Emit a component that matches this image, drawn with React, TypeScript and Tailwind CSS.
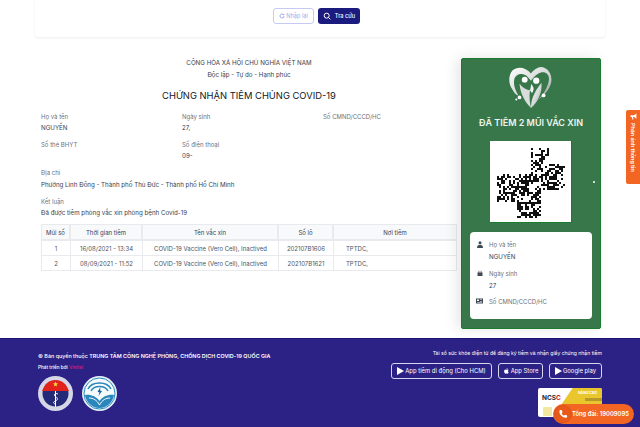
import React from "react";

const inter = "font-['Inter','Noto_Sans',sans-serif]";

function QR() {
  const regions = [
    [530, 148, 548, 165],
    [530, 163, 565, 190],
    [497, 173, 540, 202],
    [517, 190, 540, 217],
  ];
  const rects: React.ReactNode[] = [];
  let seed = 12345;
  const rnd = () => {
    seed = (seed * 1103515245 + 12345) & 0x7fffffff;
    return (seed >> 8) % 100;
  };
  for (let y = 148; y < 217; y += 2) {
    for (let x = 497; x < 565; x += 2) {
      const inside = regions.some((r) => x >= r[0] && x < r[2] && y >= r[1] && y < r[3]);
      if (inside && rnd() < 50) {
        rects.push(<rect key={`${x}-${y}`} x={x - 490} y={y - 141} width="2" height="2" fill="#111" />);
      }
    }
  }
  return (
    <svg width="82" height="82" viewBox="0 0 82 82" className="block">
      {rects}
    </svg>
  );
}

function HeartLogo() {
  return (
    <svg width="44" height="44" viewBox="0 0 42 42">
      <defs>
        <linearGradient id="silver" x1="0" y1="0" x2="1" y2="1">
          <stop offset="0" stopColor="#ffffff" />
          <stop offset="0.55" stopColor="#d4d8d6" />
          <stop offset="1" stopColor="#8f9a95" />
        </linearGradient>
      </defs>
      <path
        d="M21 8C16 2 8 1 3.500 5 -1 10 -0.500 18 3 23 5 27 7 29 9 29 6 24 4 19 5 14 6 8 14 7 17.500 11L21 15C24 11 27 8 31 7 35 6 39 9 38 15 37 21 33 28 28 33 33 30 38 24 40 18 42 10 38 3 31 2 27 2 23.500 5 21 8Z"
        fill="url(#silver)"
      />
      <path d="M21 41C15 35 11 28 10 18 13 22 17 24 20 24 19 30 20 36 21 41Z" fill="#d8dcda" />
      <path d="M21 41C21 34 23 27 31 17 32 27 27 36 21 41Z" fill="url(#silver)" />
      <path d="M20 24C21 21 21 20 21 18 23 21 25 22 22 27Z" fill="#f1f3f2" />
      <circle cx="15" cy="14" r="2.800" fill="#fff" />
      <circle cx="26" cy="15" r="3" fill="#fff" />
      <circle cx="10" cy="31" r="1.800" fill="#fff" />
      <circle cx="7" cy="33" r="1" fill="#fff" />
      <circle cx="33" cy="29" r="1.800" fill="#fff" />
    </svg>
  );
}

function HealthSeal() {
  return (
    <svg width="35" height="35" viewBox="0 0 35 35">
      <circle cx="17.500" cy="17.500" r="17.500" fill="#d5d7e6" />
      <circle cx="17.500" cy="17.500" r="13" fill="#242a78" />
      <path d="M6 11A13 13 0 0 1 29 11L31 15H4Z" fill="#e3231b" />
      <path d="M17.500 5.500l.7 1.800 1.900.1-1.500 1.200.5 1.800-1.600-1-1.600 1 .5-1.800-1.500-1.200 1.900-.1z" fill="#f6d743" />
      <path d="M17.500 15V31" stroke="#fff" strokeWidth="1" />
      <path d="M20 18c-3-1.500-5 1-2.500 2.500s2.500 3.500 0 4.500-2.500 2-.5 3" stroke="#fff" strokeWidth="1" fill="none" />
    </svg>
  );
}

function TechSeal() {
  return (
    <svg width="35" height="35" viewBox="0 0 35 35">
      <circle cx="17.500" cy="17.500" r="17.500" fill="#e6f1f7" />
      <circle cx="17.500" cy="17.500" r="15.500" fill="#f5fafc" stroke="#2a86bb" strokeWidth="1" />
      <path d="M6 13C10 5 25 5 29 13" stroke="#2a86bb" strokeWidth="1.500" fill="none" />
      <path d="M9 15C12 9 23 9 26 15" stroke="#2a86bb" strokeWidth="1.500" fill="none" />
      <path d="M18.500 11l-3 5 2 .3-1 3.700 3.500-5-2-.4z" fill="#1c5f97" />
      <path d="M3 19c5-1 11 1 14.500 6 3.500-5 9.500-7 14.500-6-1 7-7 13-14.500 13S4 26 3 19Z" fill="#2a86bb" />
      <path d="M7 22c4 0 8 2 10.500 7M28 22c-4 0-8 2-10.500 7" stroke="#fff" strokeWidth="1" fill="none" />
    </svg>
  );
}

function PlayIcon() {
  return (
    <svg width="7" height="8" viewBox="0 0 7 8">
      <path d="M0 0L7 4L0 8Z" fill="#fff" />
    </svg>
  );
}

function AppleIcon() {
  return (
    <svg width="7" height="8" viewBox="0 0 24 24" fill="#fff">
      <path d="M17 12.500c0-2.500 2-3.700 2.100-3.800-1.200-1.700-3-1.900-3.600-2-1.500-.2-3 .9-3.700.9-.8 0-2-.9-3.200-.9-1.700 0-3.200 1-4 2.400-1.700 3-.4 7.400 1.200 9.800.8 1.200 1.800 2.500 3.100 2.400 1.200 0 1.700-.8 3.200-.8s1.900.8 3.200.8 2.200-1.200 3-2.300c.9-1.400 1.300-2.700 1.300-2.800-.1 0-2.600-1-2.600-3.700zM14.600 5c.7-.8 1.100-1.900 1-3-1 0-2.100.7-2.800 1.500-.6.700-1.200 1.800-1 2.900 1.100.1 2.100-.6 2.800-1.400z" />
    </svg>
  );
}

function Field({ label, value, className = "", tall = false }: { label: string; value?: string; className?: string; tall?: boolean }) {
  return (
    <div className={className}>
      <div className={`${tall ? "h-[12px]" : "h-[11px]"} text-[6px] leading-[11px] text-[#6b7280]`}>{label}</div>
      {value && <div className="h-[12px] text-[6.200px] leading-[12px] text-[#374151]">{value}</div>}
    </div>
  );
}

function InfoRow({ icon, label, value }: { icon: React.ReactNode; label: string; value?: string }) {
  return (
    <div className="flex h-[28.500px]">
      <div className="flex w-[19px] justify-center pt-[2px]">{icon}</div>
      <div>
        <div className="h-[11px] text-[6px] leading-[11px] text-[#6b7280]">{label}</div>
        {value && <div className="mt-[1px] text-[6.200px] leading-[11px] text-[#374151]">{value}</div>}
      </div>
    </div>
  );
}

const th = "border-r-2 border-[#e8eaee]";
const td = "border-r border-[#e8eaee]";

export default function App() {
  return (
    <div className={`relative flex h-[427px] w-[640px] flex-col overflow-hidden bg-white ${inter}`}>
      <div className="mx-[35px] flex h-[37px] w-[570px] justify-start gap-[4px] rounded-b-[3px] bg-white pl-[238px] pt-[8px] shadow-[0_1px_3px_rgba(0,0,0,0.07)]">
        <button className="flex h-[16px] w-[41px] items-center justify-center gap-[1px] rounded-[3px] border border-[#c7c9f5] text-[5.600px] text-[#a6a9e8]">
          <svg width="6" height="6" viewBox="0 0 24 24" fill="none" stroke="#8b8fe0" strokeWidth="3">
            <path d="M20 12a8 8 0 1 1-3-6.200M20 3v4h-4" />
          </svg>
          Nhập lại
        </button>
        <button className="flex h-[16px] w-[42px] items-center justify-center gap-[4px] rounded-[3px] bg-[#1b1a7e] text-[5.600px] font-medium text-white">
          <svg width="8" height="8" viewBox="0 0 24 24" fill="none" stroke="#fff" strokeWidth="3">
            <circle cx="11" cy="11" r="7.500" />
            <path d="M17 17l5 5" />
          </svg>
          Tra cứu
        </button>
      </div>

      <div className="mt-[21px] flex h-[271px] pl-[41px]">
        <div className="-mt-[1px] w-[416px]">
          <div className="text-center text-[6.200px] leading-[12px] text-[#374151]">CỘNG HÒA XÃ HỘI CHỦ NGHĨA VIỆT NAM</div>
          <div className="text-center text-[6.200px] leading-[12px] text-[#374151]">Độc lập - Tự do - Hạnh phúc</div>
          <div className="mt-[7px] h-[15px] text-center text-[9.400px] font-normal leading-[15px] text-[#111827]">CHỨNG NHẬN TIÊM CHỦNG COVID-19</div>

          <div className="mt-[8px] grid grid-cols-[141px_141px_1fr] gap-y-[5px]">
            <Field label="Họ và tên" value="NGUYỄN" />
            <Field label="Ngày sinh" value="27," />
            <Field label="Số CMND/CCCD/HC" />
            <Field label="Số thẻ BHYT" />
            <Field label="Số điện thoại" value="09-" />
          </div>
          <Field tall label="Địa chỉ" value="Phường Linh Đông - Thành phố Thủ Đức - Thành phố Hồ Chí Minh" className="mt-[5px]" />
          <Field label="Kết luận" value="Đã được tiêm phòng vắc xin phòng bệnh Covid-19" className="mt-[5px]" />

          <div className="mt-[5px] border border-[#e8eaee] text-center text-[6px] text-[#4b5563]">
            <div className="grid h-[16px] grid-cols-[29px_72px_136px_55px_1fr] items-stretch border-b-2 border-[#e8eaee] bg-[#f8f9fb] leading-[15px] text-[#374151]">
              <div className={th}>Mũi số</div>
              <div className={th}>Thời gian tiêm</div>
              <div className={th}>Tên vắc xin</div>
              <div className={th}>Số lô</div>
              <div>Nơi tiêm</div>
            </div>
            <div className="grid h-[15px] grid-cols-[29px_72px_136px_55px_1fr] border-b border-[#e8eaee] leading-[15px]">
              <div className={td}>1</div>
              <div className={td}>16/08/2021 - 13:34</div>
              <div className={td}>COVID-19 Vaccine (Vero Cell), Inactived</div>
              <div className={td}>202107B1606</div>
              <div className="pl-[12px] text-left">TPTDC,</div>
            </div>
            <div className="grid h-[14px] grid-cols-[29px_72px_136px_55px_1fr] leading-[15px]">
              <div className={td}>2</div>
              <div className={td}>08/09/2021 - 11:52</div>
              <div className={td}>COVID-19 Vaccine (Vero Cell), Inactived</div>
              <div className={td}>202107B1621</div>
              <div className="pl-[12px] text-left">TPTDC,</div>
            </div>
          </div>
        </div>

        <div className="relative ml-[4px] flex w-[140px] flex-col items-center rounded-[2px] border border-[#1a7a2e] bg-[#37774a] pt-[6px] shadow-[-4px_0_14px_rgba(0,0,0,0.1)]">
          <HeartLogo />
          <div className="mt-[7px] h-[14px] whitespace-nowrap text-[9px] font-semibold leading-[14px] text-[#eef5f0]">ĐÃ TIÊM 2 MŨI VẮC XIN</div>
          <div className="mt-[11px] h-[82px] w-[82px] border-b border-r border-[#1a7a2e] bg-white">
            <QR />
          </div>
          <div className="mt-[9px] h-[87px] w-[122px] rounded-[4px] bg-white pt-[7px]">
            <InfoRow
              label="Họ và tên"
              value="NGUYỄN"
              icon={
                <svg width="6" height="7" viewBox="0 0 12 14" fill="#3f4a55">
                  <circle cx="6" cy="3.500" r="3" />
                  <path d="M0 14c0-5 2.500-6.500 6-6.500S12 9 12 14Z" />
                </svg>
              }
            />
            <InfoRow
              label="Ngày sinh"
              value="27"
              icon={
                <svg width="6" height="6" viewBox="0 0 12 12" fill="#3f4a55">
                  <path d="M1 5h10v7H1zM3 2h1v3H3zM8 2h1v3H8zM5.500 1h1v4h-1z" />
                </svg>
              }
            />
            <InfoRow
              label="Số CMND/CCCD/HC"
              icon={
                <svg width="7" height="6" viewBox="0 0 14 12" fill="#3f4a55">
                  <path d="M0 1h14v10H0zM2 3v3h4V3zM8 3v1h4V3zM8 6v1h4V6zM2 8v1h10V8z" fillRule="evenodd" />
                </svg>
              }
            />
          </div>
          <span className="absolute left-[131px] top-[122px] h-[2px] w-[2px] rounded-full bg-white" />
        </div>
      </div>

      <div className="mt-[9px] flex h-[89px] justify-between border-t border-[#1a1570] bg-[#2c2185] pl-[38px] pr-[38px] text-white">
        <div className="pt-[13px]">
          <div className="h-[8px] whitespace-nowrap text-[5.400px] font-medium leading-[8px]">
            © Bản quyền thuộc <span className="font-semibold">TRUNG TÂM CÔNG NGHỆ PHÒNG, CHỐNG DỊCH COVID-19 QUỐC GIA</span>
          </div>
          <div className="mt-[3px] h-[8px] text-[4.700px] font-medium leading-[8px]">
            Phát triển bởi <span className="text-[#d81b7a]">Viettel</span>
          </div>
          <div className="mt-[5px] flex gap-[9px]">
            <HealthSeal />
            <TechSeal />
          </div>
        </div>
        <div className="flex flex-col items-end pt-[10px]">
          <div className="h-[8px] whitespace-nowrap text-[5.100px] leading-[8px]">Tải sổ sức khỏe điện tử để đăng ký tiêm và nhận giấy chứng nhận tiêm</div>
          <div className="mt-[6px] flex gap-[6px] whitespace-nowrap text-[5.900px] leading-none">
            <div className="flex h-[16px] w-[101px] items-center justify-center gap-[1px] rounded-[3px] border border-[#d7d5f0]">
              <PlayIcon />
              App tiêm di động (Cho HCM)
            </div>
            <div className="flex h-[16px] w-[45px] items-center justify-center gap-[1px] rounded-[3px] border border-[#d7d5f0]">
              <AppleIcon />
              App Store
            </div>
            <div className="flex h-[16px] w-[53px] items-center justify-center gap-[1px] rounded-[3px] border border-[#d7d5f0]">
              <PlayIcon />
              Google play
            </div>
          </div>
          <div className="relative mt-[9px] h-[29px] w-[64px] overflow-hidden rounded-[2px] bg-white">
            <div className="absolute right-0 top-0 h-[29px] w-[49px] bg-[#e9c62b] [clip-path:polygon(40%_0,100%_0,100%_100%,0_100%)]" />
            <div className="absolute right-[5px] top-[3px] text-[3.500px] font-bold text-white">NÂNG CAO</div>
            <div className="absolute right-0 top-[10px] h-[3px] w-[17px] bg-[#b59a2a]" />
            <div className="absolute left-[4px] top-[6px] text-[6.500px] font-bold leading-[8px] text-[#1f2937]">
              NCS<span className="text-[#d81b1b]">C</span>
            </div>
            <div className="absolute left-[5px] top-[19px] h-[9px] w-[9px] rounded-[1px] bg-[#f2e7a0]" />
          </div>
        </div>
      </div>

      <div className="absolute left-[626px] top-[110px] flex h-[74px] w-[14px] flex-col items-center rounded-l-[2px] bg-[#f26522] pt-[3px] text-white">
        <svg width="7" height="7" viewBox="0 0 12 12" fill="#fff">
          <path d="M1 4h6l4-3v9L7 7H5l1 4H4L3 7H1z" />
        </svg>
        <span className="mt-[3px] whitespace-nowrap text-[5.400px] font-semibold leading-[8px] [writing-mode:vertical-rl]">Phản ánh thông tin</span>
      </div>

      <div className="absolute left-[553px] top-[404px] flex h-[20px] w-[81px] items-center rounded-full bg-[#f26522] pl-[2px] text-[5.900px] font-semibold text-white">
        <span className="flex h-[16px] w-[16px] items-center justify-center rounded-full bg-[#e8591a] ring-1 ring-[#d9541c]">
          <svg width="10" height="10" viewBox="0 0 24 24" fill="#fff">
            <path d="M6.600 2.500l3 .7 1.200 5-2.400 1.800c1.200 2.700 3.300 4.800 6 6l1.800-2.400 5 1.200.7 3c.1 1.500-1 3.200-3 3.200C10.500 21 3 13.500 3.400 5.500c0-2 1.700-3.100 3.200-3z" />
          </svg>
        </span>
        <span className="ml-[1px] whitespace-nowrap">Tổng đài: 19009095</span>
      </div>
    </div>
  );
}
